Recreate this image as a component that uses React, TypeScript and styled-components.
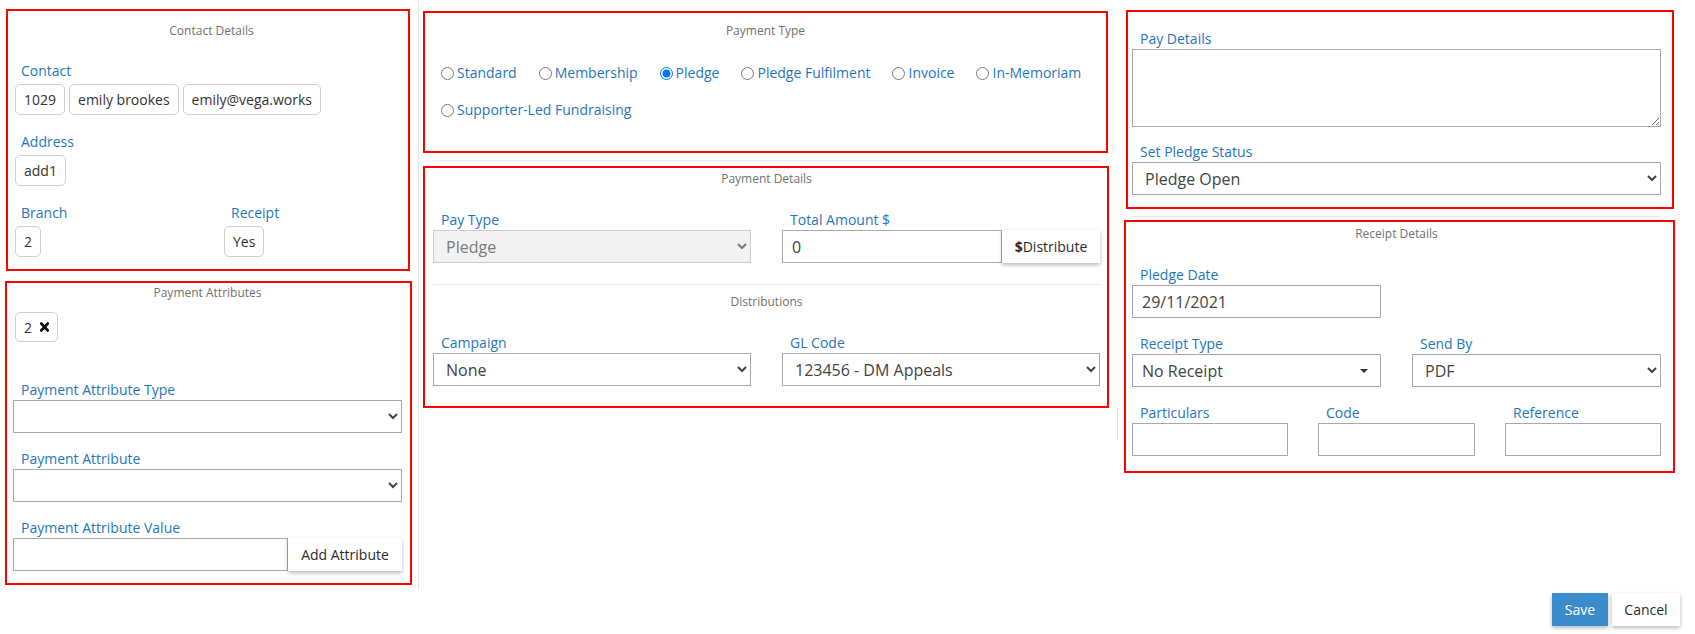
import React from 'react';
import styled, { createGlobalStyle } from 'styled-components';

const GlobalStyle = createGlobalStyle`
  html, body { margin: 0; padding: 0; background: #fff; }
  body { font-family: "Open Sans", "Liberation Sans", sans-serif; color: #333; }
  * { box-sizing: border-box; }
`;

const BLUE = '#1f76bd';

const Page = styled.div`
  width: 1695px;
  height: 634px;
  overflow: hidden;
  display: flex;
  flex-direction: column;
`;

const Columns = styled.div`
  display: flex;
  align-items: flex-start;
`;

const LeftColumn = styled.div`
  width: 419px;
  padding: 9px 0 5px 0;
  border-right: 1px solid #e6e6e6;
  display: flex;
  flex-direction: column;
`;

const MiddleColumn = styled.div`
  width: 699px;
  padding-top: 11px;
  display: flex;
  flex-direction: column;
`;

const RightColumn = styled.div`
  width: 577px;
  padding-top: 10px;
  display: flex;
  flex-direction: column;
`;

const Panel = styled.section<{ $left: number; $width: number; $pad: string; $top?: number }>`
  border: 2px solid #ff0000;
  margin-left: ${(p) => p.$left}px;
  margin-top: ${(p) => p.$top ?? 0}px;
  width: ${(p) => p.$width}px;
  padding: ${(p) => p.$pad};
  display: flex;
  flex-direction: column;
`;

const PanelTitle = styled.div<{ $mb: number }>`
  font-size: 12px;
  line-height: 16px;
  color: #717171;
  text-align: center;
  margin-bottom: ${(p) => p.$mb}px;
`;

const Rule = styled.div<{ $left: number; $width: number; $mt: number; $mb: number }>`
  height: 1px;
  background: #e9e9e9;
  margin: ${(p) => `${p.$mt}px 0 ${p.$mb}px ${p.$left}px`};
  width: ${(p) => p.$width}px;
`;

const ColumnTail = styled.div`
  height: 32px;
  border-right: 1px solid #e3e3e3;
`;

const Field = styled.div<{ $mt?: number }>`
  display: flex;
  flex-direction: column;
  align-items: stretch;
  margin-top: ${(p) => p.$mt ?? 0}px;
  min-width: 0;
`;

const Label = styled.label<{ $indent?: number; $gap?: number }>`
  display: block;
  font-size: 14px;
  line-height: 20px;
  color: ${BLUE};
  padding-left: ${(p) => p.$indent ?? 8}px;
  margin-bottom: ${(p) => p.$gap ?? 0}px;
  white-space: nowrap;
`;

const ChipRow = styled.div`
  display: flex;
  gap: 4px;
`;

const Chip = styled.span<{ $h?: number }>`
  display: inline-flex;
  align-items: center;
  gap: 8px;
  height: ${(p) => p.$h ?? 31}px;
  padding: 0 8px;
  border: 1px solid #cfcfcf;
  border-radius: 5px;
  font-size: 14px;
  color: #333;
  white-space: nowrap;
`;

const ChipWrap = styled.div<{ $pl: number }>`
  display: flex;
  padding-left: ${(p) => p.$pl}px;
`;

const TwoCol = styled.div<{ $cols: string; $gap: number }>`
  display: grid;
  grid-template-columns: ${(p) => p.$cols};
  column-gap: ${(p) => p.$gap}px;
`;

const Select = styled.select<{ $h?: number }>`
  height: ${(p) => p.$h ?? 33}px;
  width: 100%;
  border: 1px solid #a9a9a9;
  border-radius: 0;
  background-color: #fff;
  font-family: "Open Sans", "Liberation Sans", sans-serif;
  font-size: 16px;
  color: #444;
  padding: 0 6px 0 8px;
  &:disabled {
    background-color: #f2f2f2;
    border-color: #cdcdcd;
    color: #7a7a7a;
    opacity: 1;
  }
`;

const TextInput = styled.input<{ $h?: number }>`
  height: ${(p) => p.$h ?? 33}px;
  width: 100%;
  min-width: 0;
  border: 1px solid #a9a9a9;
  border-radius: 0;
  background: #fff;
  font-family: "Open Sans", "Liberation Sans", sans-serif;
  font-size: 16px;
  color: #444;
  padding: 0 9px;
  outline: none;
`;

const TextArea = styled.textarea`
  height: 78px;
  width: 100%;
  border: 1px solid #a9a9a9;
  border-radius: 0;
  font-family: "Open Sans", "Liberation Sans", sans-serif;
  font-size: 16px;
  padding: 6px 9px;
  display: block;
`;

const FakeDropdown = styled.div`
  height: 33px;
  border: 1px solid #a9a9a9;
  display: flex;
  align-items: center;
  justify-content: space-between;
  padding: 0 12px 0 9px;
  font-size: 16px;
  color: #444;
`;

const Caret = styled.span`
  width: 0;
  height: 0;
  border-left: 4px solid transparent;
  border-right: 4px solid transparent;
  border-top: 4px solid #333;
`;

const InputGroup = styled.div`
  display: flex;
  height: 33px;
`;

const ShadowButton = styled.button<{ $w: number; $primary?: boolean }>`
  width: ${(p) => p.$w}px;
  height: 33px;
  flex: none;
  border: none;
  border-radius: 0;
  background: ${(p) => (p.$primary ? '#3c8ccc' : '#fff')};
  color: ${(p) => (p.$primary ? '#fff' : '#2b2b2b')};
  font-family: "Open Sans", "Liberation Sans", sans-serif;
  font-size: 14px;
  font-weight: 400;
  padding: 0;
  box-shadow: 0 2px 4px rgba(0, 0, 0, 0.28);
  cursor: pointer;
`;

const DollarMark = styled.span`
  font-weight: 700;
`;

const RadioGroup = styled.div`
  display: flex;
  flex-wrap: wrap;
  row-gap: 17px;
  padding-left: 16px;
`;

const RadioItem = styled.label`
  display: inline-flex;
  align-items: center;
  height: 20px;
  margin-right: 22px;
  font-size: 14px;
  line-height: 20px;
  color: ${BLUE};
  white-space: nowrap;
`;

const Radio = styled.input`
  width: 13px;
  height: 13px;
  margin: 0 3px 0 0;
`;

const Footer = styled.div`
  display: flex;
  justify-content: flex-end;
  gap: 4px;
  padding-right: 15px;
  margin-top: 3px;
`;

const CloseIcon = () => (
  <svg width="9" height="10" viewBox="0 0 9 10" aria-hidden="true">
    <path d="M1.2 1.5 L7.8 8.5 M7.8 1.5 L1.2 8.5" stroke="#111" strokeWidth="2.6" strokeLinecap="round" />
  </svg>
);

const paymentTypes = [
  'Standard',
  'Membership',
  'Pledge',
  'Pledge Fulfilment',
  'Invoice',
  'In-Memoriam',
  'Supporter-Led Fundraising',
];

export default function App() {
  return (
    <>
      <GlobalStyle />
      <Page>
        <Columns>
          <LeftColumn>
            <Panel $left={6} $width={404} $pad="12px 0 12px 7px">
              <PanelTitle $mb={22}>Contact Details</PanelTitle>
              <Field>
                <Label $indent={6} $gap={3}>Contact</Label>
                <ChipRow>
                  <Chip>1029</Chip>
                  <Chip>emily brookes</Chip>
                  <Chip>emily@vega.works</Chip>
                </ChipRow>
              </Field>
              <Field $mt={17}>
                <Label $indent={6} $gap={3}>Address</Label>
                <ChipRow>
                  <Chip>add1</Chip>
                </ChipRow>
              </Field>
              <TwoCol $cols="209px 1fr" $gap={0} style={{ marginTop: 17 }}>
                <Field>
                  <Label $indent={6} $gap={3}>Branch</Label>
                  <ChipRow>
                    <Chip>2</Chip>
                  </ChipRow>
                </Field>
                <Field>
                  <Label $indent={7} $gap={3}>Receipt</Label>
                  <ChipRow>
                    <Chip>Yes</Chip>
                  </ChipRow>
                </Field>
              </TwoCol>
            </Panel>

            <Panel $left={5} $width={407} $top={10} $pad="2px 8px 12px 6px">
              <PanelTitle $mb={11}>Payment Attributes</PanelTitle>
              <ChipWrap $pl={2}>
                <Chip $h={30}>
                  2 <CloseIcon />
                </Chip>
              </ChipWrap>
              <Field $mt={38}>
                <Label>Payment Attribute Type</Label>
                <Select defaultValue="">
                  <option value=""></option>
                </Select>
              </Field>
              <Field $mt={16}>
                <Label>Payment Attribute</Label>
                <Select defaultValue="">
                  <option value=""></option>
                </Select>
              </Field>
              <Field $mt={16}>
                <Label>Payment Attribute Value</Label>
                <InputGroup>
                  <TextInput type="text" />
                  <ShadowButton $w={114}>Add Attribute</ShadowButton>
                </InputGroup>
              </Field>
            </Panel>
          </LeftColumn>

          <MiddleColumn>
            <Panel $left={4} $width={685} $pad="10px 0 31px 0">
              <PanelTitle $mb={24}>Payment Type</PanelTitle>
              <RadioGroup>
                {paymentTypes.map((t) => (
                  <RadioItem key={t}>
                    <Radio type="radio" name="ptype" defaultChecked={t === 'Pledge'} />
                    {t}
                  </RadioItem>
                ))}
              </RadioGroup>
            </Panel>
            <Rule $left={14} $width={667} $mt={7} $mb={5} />
            <Panel $left={4} $width={686} $pad="3px 7px 20px 8px">
              <PanelTitle $mb={23}>Payment Details</PanelTitle>
              <TwoCol $cols="318px 318px" $gap={31}>
                <Field>
                  <Label>Pay Type</Label>
                  <Select disabled defaultValue="Pledge">
                    <option>Pledge</option>
                  </Select>
                </Field>
                <Field>
                  <Label>Total Amount $</Label>
                  <InputGroup>
                    <TextInput type="text" defaultValue="0" />
                    <ShadowButton $w={98}>
                      <DollarMark>$</DollarMark>Distribute
                    </ShadowButton>
                  </InputGroup>
                </Field>
              </TwoCol>
              <Rule $left={0} $width={667} $mt={21} $mb={9} />
              <PanelTitle $mb={23}>Distributions</PanelTitle>
              <TwoCol $cols="318px 318px" $gap={31}>
                <Field>
                  <Label>Campaign</Label>
                  <Select defaultValue="None">
                    <option>None</option>
                  </Select>
                </Field>
                <Field>
                  <Label>GL Code</Label>
                  <Select defaultValue="123456 - DM Appeals">
                    <option>123456 - DM Appeals</option>
                  </Select>
                </Field>
              </TwoCol>
            </Panel>
            <ColumnTail />
          </MiddleColumn>

          <RightColumn>
            <Panel $left={8} $width={548} $pad="17px 11px 12px 4px">
              <Field>
                <Label>Pay Details</Label>
                <TextArea />
              </Field>
              <Field $mt={15}>
                <Label>Set Pledge Status</Label>
                <Select defaultValue="Pledge Open">
                  <option>Pledge Open</option>
                </Select>
              </Field>
            </Panel>
            <Rule $left={14} $width={529} $mt={7} $mb={3} />
            <Panel $left={6} $width={551} $pad="4px 12px 15px 6px">
              <PanelTitle $mb={23}>Receipt Details</PanelTitle>
              <TwoCol $cols="249px 249px" $gap={31}>
                <Field>
                  <Label>Pledge Date</Label>
                  <TextInput type="text" defaultValue="29/11/2021" />
                </Field>
              </TwoCol>
              <TwoCol $cols="249px 249px" $gap={31} style={{ marginTop: 16 }}>
                <Field>
                  <Label>Receipt Type</Label>
                  <FakeDropdown>
                    No Receipt
                    <Caret />
                  </FakeDropdown>
                </Field>
                <Field>
                  <Label>Send By</Label>
                  <Select defaultValue="PDF">
                    <option>PDF</option>
                  </Select>
                </Field>
              </TwoCol>
              <TwoCol $cols="156px 157px 156px" $gap={30} style={{ marginTop: 16 }}>
                <Field>
                  <Label>Particulars</Label>
                  <TextInput type="text" />
                </Field>
                <Field>
                  <Label>Code</Label>
                  <TextInput type="text" />
                </Field>
                <Field>
                  <Label>Reference</Label>
                  <TextInput type="text" />
                </Field>
              </TwoCol>
            </Panel>
          </RightColumn>
        </Columns>
        <Footer>
          <ShadowButton $w={56} $primary>Save</ShadowButton>
          <ShadowButton $w={68}>Cancel</ShadowButton>
        </Footer>
      </Page>
    </>
  );
}
